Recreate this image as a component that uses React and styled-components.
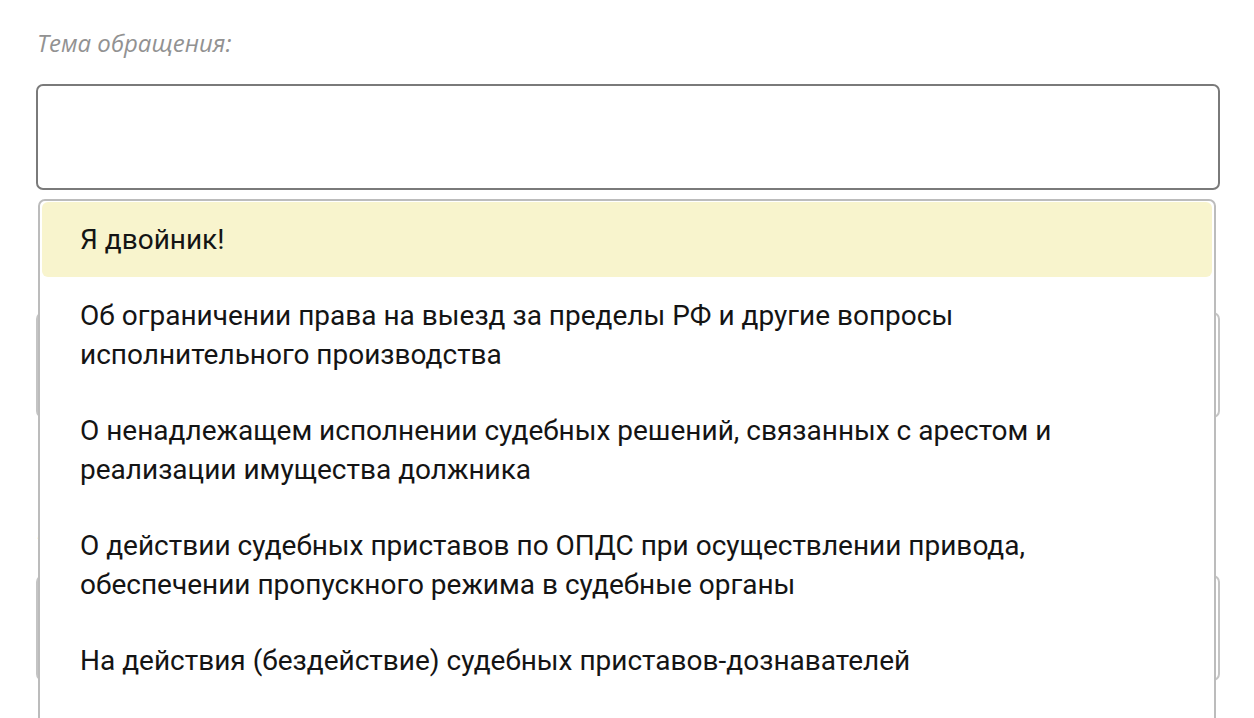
import React from 'react';
import styled, { createGlobalStyle } from 'styled-components';

const GlobalStyle = createGlobalStyle`
	html, body {
		margin: 0;
		padding: 0;
		background: #fff;
	}
	body {
		font-family: Roboto, "Liberation Sans", sans-serif;
	}
`;

const Page = styled.div`
	position: relative;
	width: 1254px;
	height: 718px;
	overflow: hidden;
	background: #fff;
`;

const Form = styled.div`
	display: flex;
	flex-direction: column;
	padding: 29px 34px 0 36px;
`;

const Label = styled.div`
	font-family: "Open Sans", Roboto, sans-serif;
	font-style: italic;
	font-size: 24px;
	line-height: 28px;
	color: #929292;
	margin: 0 0 ${(p) => p.gap || 27}px 1px;
`;

const Field = styled.div`
	height: 106px;
	flex-shrink: 0;
	border: 2px solid ${(p) => (p.active ? '#7a7a7a' : '#c4c4c4')};
	border-radius: 7px;
	box-sizing: border-box;
	margin-bottom: ${(p) => p.mb || 0}px;
`;

const Dropdown = styled.div`
	position: absolute;
	left: 38px;
	top: 199px;
	width: 1178px;
	height: 560px;
	box-sizing: border-box;
	border: 2px solid #bcbcbc;
	border-radius: 7px;
	background: #fff;
	padding: 1px 2px;
	display: flex;
	flex-direction: column;
	gap: 1px;
`;

const Option = styled.div`
	padding: 18px 20px 18px 38px;
	font-size: 28px;
	line-height: 39px;
	color: #141414;
	border-radius: 6px;
	background: ${(p) => (p.selected ? '#f8f4cd' : 'transparent')};
`;

const options = [
	['Я двойник!'],
	['Об ограничении права на выезд за пределы РФ и другие вопросы', 'исполнительного производства'],
	['О ненадлежащем исполнении судебных решений, связанных с арестом и', 'реализации имущества должника'],
	['О действии судебных приставов по ОПДС при осуществлении привода,', 'обеспечении пропускного режима в судебные органы'],
	['На действия (бездействие) судебных приставов-дознавателей']
];

const App = () => {
	return (
		<Page>
			<GlobalStyle />
			<Form>
				<Label>Тема обращения:</Label>
				<Field active mb={62} />
				<Label gap={32}>Текст обращения:</Label>
				<Field mb={65} />
				<Label gap={5}>Файлы:</Label>
				<Label gap={31}>Прикрепить файл</Label>
				<Field />
			</Form>
			<Dropdown>
				{options.map((lines, index) => (
					<Option key={index} selected={index === 0}>
						{lines.map((line, i) => (
							<div key={i}>{line}</div>
						))}
					</Option>
				))}
			</Dropdown>
		</Page>
	);
};

export default App;
